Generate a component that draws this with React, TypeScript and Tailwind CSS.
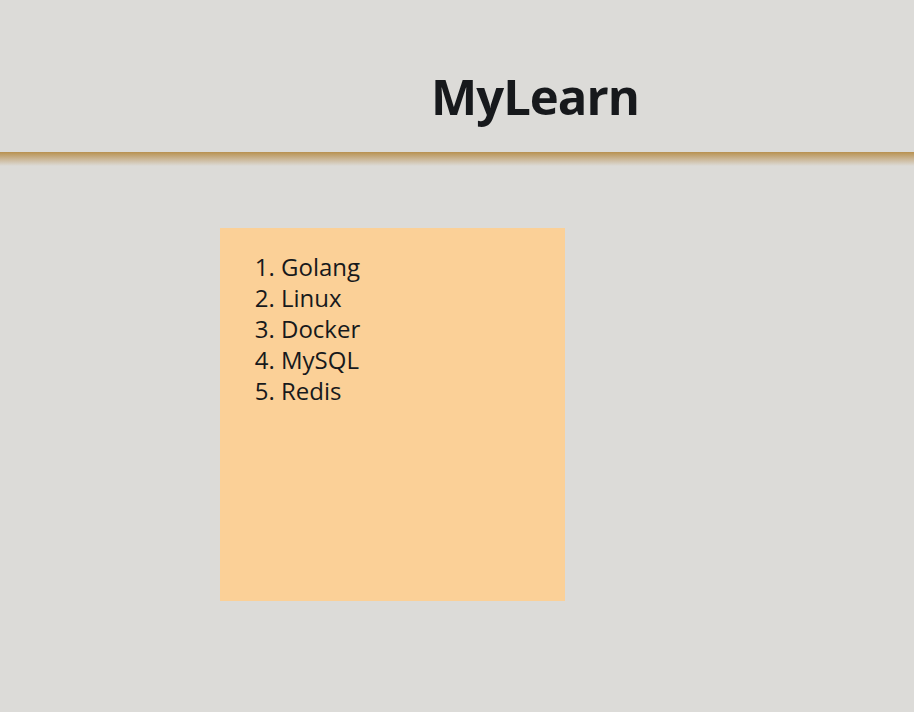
import React from "react";

const topics = ["Golang", "Linux", "Docker", "MySQL", "Redis"];

export default function App() {
  return (
    <div
      className="min-h-[712px] w-full bg-[#dcdbd8] text-[#17191c]"
      style={{ fontFamily: '"Open Sans", "Noto Sans", sans-serif' }}
    >
      <header className="h-[152px] flex items-start justify-center pl-[156px]">
        <h1 className="mt-[64px] text-[49px] leading-[64px] font-bold tracking-[-1px]">MyLearn</h1>
      </header>
      <div className="h-[14px] bg-gradient-to-b from-[#b8914f] to-[#dcdbd8]" />

      <main className="pl-[220px] pt-[62px]">
        <div className="w-[345px] h-[373px] bg-[#fbd097] pt-[23px] pl-[61px]">
          <ol className="list-decimal text-[24px] leading-[31px]">
            {topics.map((t) => (
              <li key={t}>{t}</li>
            ))}
          </ol>
        </div>
      </main>
    </div>
  );
}
